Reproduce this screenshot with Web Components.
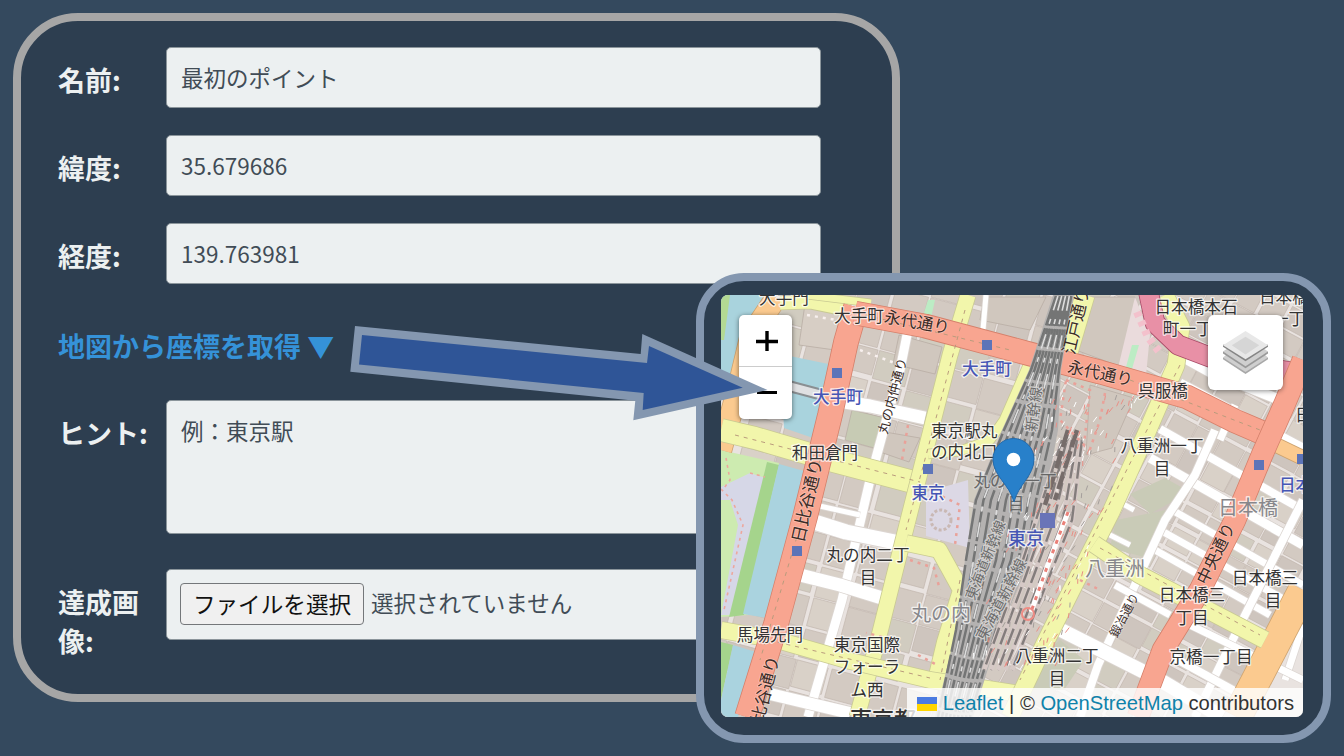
<!DOCTYPE html>
<html lang="ja">
<head>
<meta charset="utf-8">
<title>ポイント編集</title>
<style>
html,body{margin:0;height:100%}
body{overflow:hidden;background:#34495e;font-family:"Noto Sans CJK JP","Noto Sans",sans-serif}
</style>
</head>
<body>
<guide-stage>
  <form-panel>
    <form-row label="名前:">最初のポイント</form-row>
    <form-row label="緯度:">35.679686</form-row>
    <form-row label="経度:">139.763981</form-row>
    <map-toggle>地図から座標を取得 ▼</map-toggle>
    <form-row label="ヒント:" class="hint">例：東京駅</form-row>
    <form-row label="達成画像:" class="file"><file-picker></file-picker></form-row>
  </form-panel>
  <map-panel slot="overlay"></map-panel>
  <pointer-arrow slot="overlay"></pointer-arrow>
</guide-stage>
<script>
class Base extends HTMLElement{
  constructor(){super();this.attachShadow({mode:'open'});}
  connectedCallback(){this.shadowRoot.innerHTML=this.view();}
}
customElements.define('guide-stage',class extends Base{view(){return `
<style>:host{display:block;position:relative;box-sizing:border-box;width:1344px;height:756px;padding:13px;overflow:hidden;background:#34495e}</style>
<slot></slot><slot name="overlay"></slot>`}});

customElements.define('form-panel',class extends Base{view(){return `
<style>:host{display:flex;flex-direction:column;gap:27px;box-sizing:border-box;width:887px;height:689px;padding:26px 37px;border:8px solid #a6a6a6;border-radius:65px;background:#2d3e50}
::slotted(.hint){--field-height:134px}
::slotted(.file){--field-height:71px;margin-top:8px}</style><slot></slot>`}});

customElements.define('form-row',class extends Base{view(){return `
<style>:host{display:grid;grid-template-columns:108px 655px;align-items:start}
label{padding-top:13px;width:90px;font-size:27px;line-height:39px;font-weight:700;color:#ecf0f1;height:46px}
.field{box-sizing:border-box;height:var(--field-height,61px);padding:13px 14px;border:1px solid #8b959b;border-radius:5px;background:#ecf0f1;color:#414c56;font-size:22.5px;line-height:33px}</style>
<label>${this.getAttribute('label')}</label><div class="field"><slot></slot></div>`}});

customElements.define('map-toggle',class extends Base{view(){return `
<style>:host{display:block;height:47px;padding-top:15px;font-size:27px;line-height:39px;font-weight:700;color:#3592d8;white-space:nowrap}</style><slot></slot>`}});

customElements.define('file-picker',class extends Base{view(){return `
<style>:host{display:flex;align-items:center;gap:7px;height:42px;margin-left:-1px}
button{flex:none;box-sizing:border-box;width:184px;height:42px;padding:0 0 2px;border:1.5px solid #74777a;border-radius:4px;background:#f0f0f0;color:#111;font:22.6px "Noto Sans CJK JP",sans-serif;white-space:nowrap}
span{line-height:36px;padding-bottom:4px}</style>
<button type="button">ファイルを選択</button><span>選択されていません</span>`}});

customElements.define('pointer-arrow',class extends Base{view(){return `
<style>:host{position:absolute;left:0;top:0;width:1344px;height:756px;pointer-events:none}svg{display:block}</style>
<svg width="1344" height="756"><polygon fill="#8497b0" points="355,326 640.7,354 642.3,334 767.5,390 633.3,420.3 635.3,400.7 350.3,371.7"/>
<polygon fill="#2f5597" points="362,335 647,363 649,346 742.7,387.7 642.7,410 643.7,393 359,364.5"/></svg>`}});

customElements.define('map-panel',class extends Base{view(){return `
<style>:host{position:absolute;left:696px;top:273px;box-sizing:border-box;width:635px;height:470px;padding:14px 17px;border:8px solid #8497b0;border-radius:48px;background:#2d3e50}
.map{position:relative;width:582px;height:422px;border-radius:7px;overflow:hidden}
zoom-control{position:absolute;left:18px;top:20px}
layer-button{position:absolute;right:20px;top:20px}
map-credit{position:absolute;right:0;bottom:0}</style>
<div class="map"><city-map></city-map><zoom-control></zoom-control><layer-button></layer-button><map-credit></map-credit></div>`}});

customElements.define('zoom-control',class extends Base{view(){return `
<style>:host{display:flex;flex-direction:column;width:53px;height:104px;border-radius:5px;background:#fff;overflow:hidden;box-shadow:0 1px 5px #0008}
div{height:51px;display:grid;place-items:center}div+div{border-top:1px solid #ccc}svg{position:relative;left:1px}</style>
<div><svg width="22" height="22" stroke="#000" stroke-width="3.4"><path d="M0 11.500H22M11 1V21"/></svg></div>
<div><svg width="22" height="22" stroke="#000" stroke-width="3.2"><path d="M1 10.500H21"/></svg></div>`}});

customElements.define('layer-button',class extends Base{view(){return `
<style>:host{display:grid;place-items:center;width:75px;height:75px;border-radius:6px;background:#fff;box-shadow:0 1px 5px #0007}</style>
<svg width="45" height="45" viewBox="0 0 46 46"><path d="M0 30 23 45 46 30V28H0Z" fill="#a8a8a8"/><path d="M0 28 23 43 46 28 40 23H6Z" fill="#cfcfcf"/><path d="M0 24 23 39 46 24V22H0Z" fill="#999"/><path d="M0 22 23 37 46 22 40 18H6Z" fill="#cfcfcf"/><path d="M0 17 23 32 46 17V15H0Z" fill="#858585"/><path d="M0 15.500 23 1 46 15.500 23 30Z" fill="#e8e8e8"/><path d="M9 15.500 23 7 37 15.500 23 25Z" fill="#d6d6d6"/></svg>`}});

customElements.define('map-credit',class extends Base{view(){return `
<style>:host{display:flex;align-items:center;box-sizing:border-box;width:396px;height:29px;padding:2px 9px 0;justify-content:flex-end;background:#fffc;color:#333;font:20.2px/27px "Liberation Sans",Arial,sans-serif}
span{white-space:pre}svg{flex:none;margin-right:6px}a{color:#0f82aa}</style>
<svg width="20" height="14"><path fill="#4c7be1" d="M0 0H20V7H0Z"/><path fill="#ffd500" d="M0 7H20V14H0Z"/></svg><a>Leaflet</a><span> | © </span><a>OpenStreetMap</a><span> contributors</span>`}});

customElements.define('city-map',class extends Base{view(){
let seed=7;const rnd=()=>{seed=(seed*16807)%2147483647;return seed/2147483647};
// Rotated city blocks: a skewed lattice of building footprints
const blocks=(ox,oy,a,b,w,h,nx,ny)=>{let s='';const ux=Math.cos(a),uy=Math.sin(a),vx=-Math.sin(b),vy=Math.cos(b);
 for(let i=0;i<nx;i++)for(let j=0;j<ny;j++){const x=ox+i*w*ux+j*h*vx,y=oy+i*w*uy+j*h*vy;
  const p=w*(.84+.14*rnd()),q=h*(.78+.2*rnd()),f=['#d3cac2','#d3cac2','#cec5be','#d9d1c8','#d1ccc0','#d3cac2'][Math.floor(rnd()*6)];
  s+=`<path d="M${x.toFixed(1)} ${y.toFixed(1)}l${(p*ux).toFixed(1)} ${(p*uy).toFixed(1)} ${(q*vx).toFixed(1)} ${(q*vy).toFixed(1)} ${(-p*ux).toFixed(1)} ${(-p*uy).toFixed(1)}z" fill="${f}"/>`}return s};
const road=(d,w,fill,edge)=>`<path d="M${d}" stroke="${edge}" stroke-width="${w+1.6}"/><path d="M${d}" stroke="${fill}" stroke-width="${w}"/>`;
const Y=(d,w)=>road(d,w,'#f2f6ab','#c9ca93'),R=(d,w)=>road(d,w,'#f8a590','#d5806b'),O=(d,w)=>road(d,w,'#fbca8f','#cda36f'),W=(d,w)=>road(d,w,'#fff','#dcd6d2');
const T=(x,y,t,o='')=>`<text x="${x}" y="${y}" ${o}>${t}</text>`;
const V=(x,y,r,t,s=16,c='')=>`<text transform="translate(${x} ${y}) rotate(${r})" style="font-size:${s}px" class="road ${c}">${t}</text>`;
const rails=[];for(let k=0;k<9;k++){rails.push(`M${1056+k*1.9} 296L${1031+k*3.5} 370L${1004+k*6} 430L${976+k*7.5} 500L${966+k*7.5} 560L${956+k*5} 630L${938+k*4} 717`)}
const plat=[];for(let k=0;k<5;k++){plat.push(`M${1062+k*5} 440L${1036+k*9} 520L${1018+k*8} 575L${984+k*7} 670`)}
const dots=[];for(let k=0;k<230;k++){const t=rnd(),y=400+t*270;dots.push(`<path d="M${(1016+(rnd()-.15)*90+(.55-t)*85).toFixed(1)} ${y.toFixed(1)}l${(rnd()*4).toFixed(1)} -5" stroke="${rnd()>.6?'#e98f86':rnd()>.5?'#fff':'#a59f9c'}"/>`)}
const sq=[[987,345],[837,373],[928,469],[797,551],[1259,465],[1302,459]].map(([x,y])=>`<rect x="${x-5}" y="${y-5}" width="10" height="10" fill="#5d74b8"/>`).join('');
return `
<style>:host{display:block;width:582px;height:422px}svg{display:block}
text{font:16.6px "Noto Sans CJK JP",sans-serif;fill:#333;paint-order:stroke;stroke:#ffffffb8;stroke-width:2.6px;stroke-linejoin:round}
.c{text-anchor:middle}.road{fill:#3a2c28;stroke:#fff5;stroke-width:1.5px;text-anchor:middle}
.st{fill:#4656b5;font-weight:500}.area{font-size:20px;fill:#87878b}.gray{fill:#666;stroke:#ddd9}.jr{fill:#6d6d6d;stroke:#d2d0cf;stroke-width:2.4px}</style>
<svg width="582" height="422" viewBox="721 295 582 422">
<defs><clipPath id="w"><path d="M721 295H1060L1000 480 940 717H721Z"/></clipPath><clipPath id="e"><path d="M1060 295H1303V717H940L1000 480Z"/></clipPath></defs>
<rect x="721" y="295" width="582" height="422" fill="#e9e3e0"/>
<g clip-path="url(#w)" stroke="#c2b6ad" stroke-width=".7">${blocks(800,230,.26,.26,36,32,9,17)}</g>
<g clip-path="url(#e)" stroke="#c2b6ad" stroke-width=".7">${blocks(1090,170,.49,.49,27,25,14,25)}</g>
<g stroke="#b9ada4" stroke-width=".8" fill="#d0c7be"><path d="M1083 297H1135L1140 345 1124 368 1073 349Z"/><path d="M806 297 841 314 835 350 799 345Z" fill="#d7cec5"/><path d="M852 410 885 418 874 448 845 440Z" fill="#c7cbb4"/><path d="M885 432 920 438 909 462 880 452Z"/><path d="M899 335 942 347 935 374 893 364Z"/><path d="M984 297H1046L1030 330 980 320Z"/><path d="M1090 385 1134 398 1112 448 1086 455Z"/></g>
<path d="M1116 520 1166 510 1144 557 1110 548ZM1025 670 1060 640 1084 660 1064 690H1025ZM1130 494 1165 478 1190 492 1150 514Z" fill="#c9cbb7"/>
<path d="M721 295H766L741 360 727 400H721Z" fill="#a9d3dd"/><path d="M721 295H730L724 340H721Z" fill="#b3d993"/>
<path d="M780 354 838 366 816 439 784 428Z" fill="#a9d3dd"/><path d="M785 385 830 397" stroke="#8a8f92" stroke-width="12"/><path d="M785 385 830 397" stroke="#dfe0e2" stroke-width="8"/><path d="M721 450 779 463 748 615 721 617Z" fill="#cdebb0"/><path d="M721 487 750 473 766 478 757 520 735 615H721L738 525 730 500H721Z" fill="#d6d7e7"/>
<path d="M767 462 779 465 744 615 729 617Z" fill="#a5d48c"/><path d="M779 464 804 471 767 618 743 614Z" fill="#aad3df"/>
<path d="M721 642 733 645 721 700Z" fill="#a5d48c"/><path d="M733 645 759 653 738 717H721V700Z" fill="#aad3df"/>
<path d="M721 489 732 500 743 525 724 610M750 473 765 477M726 458 730 480 724 488" fill="none" stroke="#eda79d" stroke-width="1.6" stroke-dasharray="3 4"/>
<path d="M926 492 968 480 970 548 926 536Z" fill="#dcd8e5"/><path d="M1118 368 1135 297 1150 335 1146 375Z" fill="#eadbdc"/><path d="M1132 345H1139L1132 369 1126 367Z" fill="#bcecc4"/><path d="M928 300H935L931 318 923 316Z" fill="#bcecc4"/>
<g fill="none" stroke-linejoin="round">
${W('909 325L900 370 870 480 842 600 808 717',9)}${W('832 400L870 406 925 418',13)}${W('808 520L846 532 900 543',15)}${W('800 575L840 585 882 598',13)}${W('770 694L850 713',12)}${W('986 295L983 330',5)}${W('815 505L860 515',5)}
${W('1160 429L1303 510',8)}${W('1150 458L1303 545',9)}${W('1172 510L1303 585',7)}${W('1160 530L1303 610',7)}${W('1155 550L1270 615',7)}${W('1180 383L1303 448',9)}${W('1170 350L1210 372 1285 402',10)}
${W('1215 430L1195 475 1165 520 1098 665 1080 717',8)}${W('1303 500L1235 635 1195 717',8)}${W('1303 625L1285 680',7)}${W('1057 628L1160 680 1222 717',14)}${W('1115 585L1170 615',7)}${W('1160 650L1260 705',8)}${W('1190 625L1303 680',7)}${W('1235 405L1220 440',7)}
${W('1100 530L1130 545',5)}${W('1110 497L1134 510',5)}
${O('776 298L751 335 739 385 721 450',21)}${O('1270 442L1303 458',14)}${O('1303 590L1237 717',29)}
${Y('780 303L810 302 849 310',13)}${Y('806 295L871 303',7)}${Y('721 430L755 438 830 460 917 483',22)}${Y('968 295L950 355 922 465 902 544 880 632 857 717',15)}
${Y('928 454L960 451 990 440 1004 420 1028 365',9)}${Y('906 543L939 550 961 590 945 642 935 684',16)}${Y('721 630L777 640 850 661 930 680 1020 694',16)}${Y('1020 690L1010 717',10)}
${Y('1085 295L1067 356',19)}${Y('1165 295L1181 327 1176 365 1147 432 1111 512 1073 587 1045 643 1010 717',17)}${Y('1094 544L1140 575 1198 605 1265 640',17)}
${road('1148 290L1155 323 1178 345 1215 359 1303 374',19,'#e890a6','#a94b68')}
${R('856 307L846 342 830 415 805 517 776 624 747 717',24)}${R('855 313L925 326 1030 354 1100 372 1187 397 1235 421 1272 437',23)}${R('1303 360L1285 403 1262 455 1235 520 1200 590 1163 650 1138 717',21)}
</g>
<path d="M1053 295H1074L1061 370 1058 430 1045 500 1030 560 1000 630 973 717H935L955 635 965 560 974 500 1002 430 1029 370Z" fill="#b4b2b1"/>
<g fill="none"><path d="${rails.join('')}" stroke="#747575" stroke-width="2.5" stroke-dasharray="31 3 19 4"/><path d="${rails.filter((_,i)=>i%2).join('')}" stroke="#ddd" stroke-width="1.6" stroke-dasharray="15 9 5 11"/>
<path d="${plat.join('')}" stroke="#d6c9c6" stroke-width="5"/><path d="${plat.join('')}" stroke="#837d7c" stroke-width="2.400" stroke-dasharray="17 5"/><path d="M1068 430 1045 505M1077 430 1055 500" stroke="#766c6a" stroke-width="4.500" stroke-dasharray="18 4"/>${dots.join('')}
<g stroke="#e9a199" stroke-width="2.5" stroke-dasharray="3 5"><path d="M1066 380 1090 390 1084 445 1060 420ZM1105 393 1100 420 1088 455M935 493 960 505 955 545M910 560 934 568 940 590M1080 580 1100 590M918 655 937 665M882 637 866 633M908 425 902 460"/><path d="M807 315 836 320M860 350 900 365" stroke="#f8f0ee"/></g>
<path d="M1068 512 1046 570 1031 612" stroke="#fff" stroke-width="5"/><path d="M1068 512 1046 570 1031 612" stroke="#ea8078" stroke-width="3" stroke-dasharray="4 6"/>
<circle cx="1028" cy="614" r="6" stroke="#ef8c84" stroke-width="2"/><circle cx="941" cy="520" r="10" stroke="#c9b8b4" stroke-width="3" stroke-dasharray="3 2"/>
<g stroke="#b99b7c" stroke-width="1" stroke-dasharray="4 5"><path d="M735 435 920 482M760 638 930 678M965 310 906 530M1180 365 1020 680M1100 548 1260 635M865 315 1010 350M1130 380 1260 430M960 580 940 680M820 460 760 660"/></g>
<g stroke="#f3c1cc" stroke-width="8" stroke-dasharray="5 5"><path d="M1137 312 1148 337 1161 354"/></g></g>
${sq}<rect x="1040" y="513" width="15" height="15" fill="#6974b8"/>
${V(1039,410,-83,'新幹線',15,'jr')}${V(990,562,-68,'東海道新幹線',14,'jr')}${V(1006,602,-62,'東海道新幹線',15,'jr')}
${T(784,304,'大手門','class="c"')}${T(859,322,'大手町','class="c"')}${T(987,375,'大手町','class="c st"')}${T(838,403,'大手町','class="c st"')}${T(825,459,'和田倉門','class="c"')}
${T(931,437,'東京駅丸')}${T(931,458,'の内北口')}${T(928,499,'東京','class="c st"')}${T(1015,487,'丸の内一丁','class="c gray"')}${T(1016,510,'目','class="c gray"')}${T(1026,545,'東京','class="c st" style="font-size:18px"')}
${T(868,561,'丸の内二丁','class="c"')}${T(868,584,'目','class="c"')}${T(941,621,'丸の内','class="c area"')}${T(770,641,'馬場先門','class="c"')}${T(867,651,'東京国際','class="c"')}${T(867,673,'フォーラ','class="c"')}${T(867,696,'ム西','class="c"')}${T(850,727,'東京都','style="font-size:22px;font-weight:500"')}
${T(1196,313,'日本橋本石','class="c"')}${T(1196,335,'町一丁目','class="c"')}${T(1259,303,'日本橋')}${T(1272,325,'一丁')}${T(1163,397,'呉服橋','class="c"')}${T(1162,452,'八重洲一丁','class="c"')}${T(1162,475,'目','class="c"')}
${T(1279,491,'日本橋','class="st"')}${T(1248,515,'日本橋','class="c area"')}${T(1295,421,'日')}${T(1115,576,'八重洲','class="c area"')}${T(1192,601,'日本橋三','class="c"')}${T(1192,624,'丁目','class="c"')}${T(1265,584,'日本橋三','class="c"')}${T(1273,607,'目','class="c"')}${T(1211,663,'京橋一丁目','class="c"')}${T(1057,662,'八重洲二丁','class="c"')}${T(1057,685,'目','class="c"')}
${V(916,328,10,'永代通り',16.5)}${V(1099,379,12,'永代通り',16.5)}${V(897,397,-75,'丸の内仲通り',13)}${V(813,502,-77,'日比谷通り',17)}${V(769,699,-76,'日比谷通り',17)}${V(1221,556,-64,'中央通り',16.5)}${V(1128,617,-62,'鍛冶通り',12)}${V(1082,322,-77,'江戸通り',17)}
<path d="M1014 502C1010 485 993 476 993 459a20.5 20.5 0 0 1 41 0C1034 476 1018 485 1014 502Z" fill="#2880ca" stroke="#246aab" stroke-width="1"/><circle cx="1013.500" cy="459.500" r="6.800" fill="#fff"/>
</svg>`}});
</script>
</body>
</html>
